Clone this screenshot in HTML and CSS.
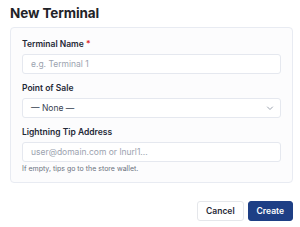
FILE: index.html
```html
<!DOCTYPE html>
<html>
<head>
<meta charset="utf-8">
<link rel="stylesheet" href="styles.css">
</head>
<body>
<div class="page">
  <h1 class="title">New Terminal</h1>
  <div class="card">
    <div class="field">
      <label class="label">Terminal Name <span class="req">*</span></label>
      <div class="input placeholder">e.g. Terminal 1</div>
    </div>
    <div class="field">
      <label class="label">Point of Sale</label>
      <div class="input select">
        <span>— None —</span>
        <svg class="chev" width="8" height="8" viewBox="0 0 8 8"><path d="M1.5 3 L4 5.5 L6.5 3" fill="none" stroke="#9ca3af" stroke-width="1" stroke-linecap="round" stroke-linejoin="round"/></svg>
      </div>
    </div>
    <div class="field">
      <label class="label">Lightning Tip Address</label>
      <div class="input placeholder">user@domain.com or lnurl1...</div>
      <p class="help">If empty, tips go to the store wallet.</p>
    </div>
  </div>
  <div class="actions">
    <button class="btn btn-cancel">Cancel</button>
    <button class="btn btn-create">Create</button>
  </div>
</div>
</body>
</html>
```
FILE: styles.css
```css
html, body {
  margin: 0;
  padding: 0;
  background: #ffffff;
}
body {
  font-family: Inter, "Liberation Sans", sans-serif;
  color: #111827;
}
.page {
  width: 283px;
  padding: 5px 0 0 10px;
}
.title {
  margin: 0;
  font-size: 13.5px;
  line-height: 16px;
  font-weight: 700;
  color: #1f2328;
  letter-spacing: -0.1px;
}
.card {
  margin-top: 6px;
  background: #fcfcfd;
  border: 1px solid #e8ebf2;
  border-radius: 4px;
  padding: 10px 11px 8px;
  display: flex;
  flex-direction: column;
  gap: 8px;
}
.field {
  display: flex;
  flex-direction: column;
}
.label {
  font-size: 8.5px;
  line-height: 12px;
  font-weight: 600;
  color: #1f2937;
  margin-bottom: 4px;
}
.req {
  color: #dc2626;
}
.input {
  height: 18px;
  border: 1px solid #e5e8ef;
  border-radius: 3px;
  background: #ffffff;
  font-size: 8.5px;
  line-height: 18px;
  padding: 0 8px;
  color: #374151;
}
.placeholder {
  color: #9ca3af;
}
.select {
  display: flex;
  align-items: center;
  justify-content: space-between;
  padding-right: 6px;
}
.chev {
  display: block;
}
.help {
  margin: 2px 0 0;
  font-size: 7px;
  line-height: 10px;
  color: #6b7280;
}
.actions {
  display: flex;
  justify-content: flex-end;
  gap: 4px;
  margin-top: 18px;
}
.btn {
  height: 20px;
  border-radius: 3px;
  font-family: Inter, "Liberation Sans", sans-serif;
  font-size: 8.5px;
  font-weight: 600;
  padding: 0 8px;
  cursor: pointer;
}
.btn-cancel {
  background: #ffffff;
  border: 1px solid #e5e7eb;
  color: #1f2937;
}
.btn-create {
  background: #1e3f85;
  border: 1px solid #1e3f85;
  color: #ffffff;
}
```
